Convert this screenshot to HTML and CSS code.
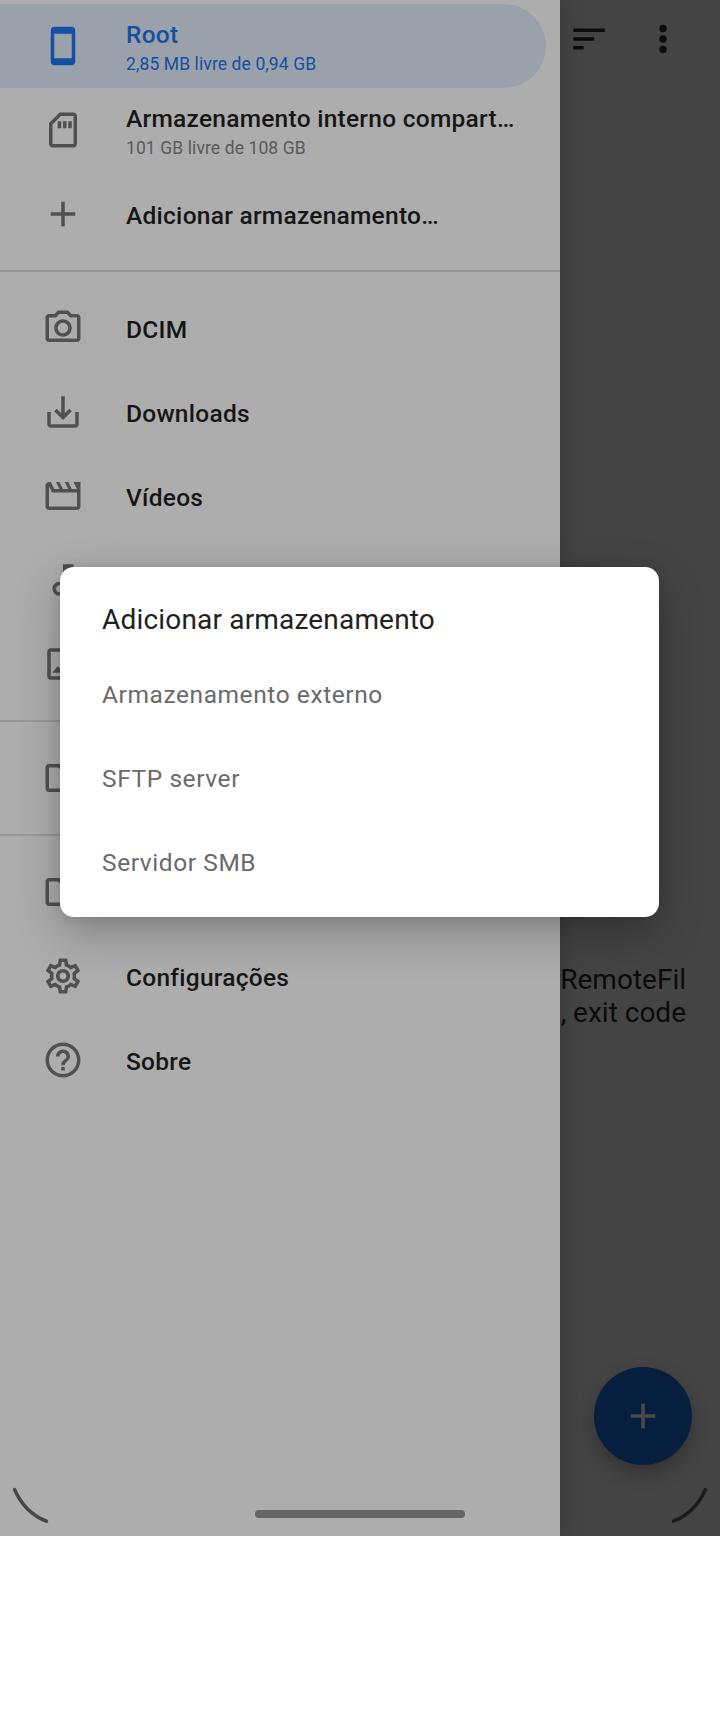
FILE: index.html
```html
<!DOCTYPE html>
<html lang="pt-BR">
<head>
<meta charset="utf-8">
<title>Adicionar armazenamento</title>
<link rel="stylesheet" href="styles.css">
</head>
<body>
<div class="screen">
  <nav class="drawer">
    <div class="group">
      <a class="item item--active">
        <svg class="icon" viewBox="0 0 24 24"><path d="M17 1.01L7 1c-1.1 0-2 .9-2 2v18c0 1.1.9 2 2 2h10c1.1 0 2-.9 2-2V3c0-1.1-.9-1.99-2-1.99zM17 19H7V5h10v14z"/></svg>
        <div class="label label--double"><span class="title">Root</span><span class="subtitle">2,85 MB livre de 0,94 GB</span></div>
      </a>
      <a class="item">
        <svg class="icon" viewBox="0 0 24 24"><path d="M18 2h-8L4 8v12c0 1.1.9 2 2 2h12c1.1 0 2-.9 2-2V4c0-1.1-.9-2-2-2zm0 18H6V8.83L10.83 4H18v16zM9 7h2v4H9zM12 7h2v4h-2zM15 7h2v4h-2z"/></svg>
        <div class="label label--double"><span class="title">Armazenamento interno compart…</span><span class="subtitle">101 GB livre de 108 GB</span></div>
      </a>
      <a class="item">
        <svg class="icon" viewBox="0 0 24 24"><path d="M19 13h-6v6h-2v-6H5v-2h6V5h2v6h6v2z"/></svg>
        <div class="label"><span class="title">Adicionar armazenamento…</span></div>
      </a>
    </div>
    <div class="group">
      <a class="item">
        <svg class="icon" viewBox="0 0 24 24"><path d="M14.12 4l1.83 2H20v12H4V6h4.05l1.83-2h4.24M15 2H9L7.17 4H4c-1.1 0-2 .9-2 2v12c0 1.1.9 2 2 2h16c1.1 0 2-.9 2-2V6c0-1.1-.9-2-2-2h-3.17L15 2zm-3 7c1.65 0 3 1.35 3 3s-1.35 3-3 3-3-1.35-3-3 1.35-3 3-3m0-2c-2.76 0-5 2.24-5 5s2.24 5 5 5 5-2.24 5-5-2.24-5-5-5z"/></svg>
        <div class="label"><span class="title">DCIM</span></div>
      </a>
      <a class="item">
        <svg class="icon" viewBox="0 0 24 24"><path d="M19 12v7H5v-7H3v7c0 1.1.9 2 2 2h14c1.1 0 2-.9 2-2v-7h-2zm-6 .67l2.59-2.58L17 11.5l-5 5-5-5 1.41-1.41L11 12.67V3h2v9.67z"/></svg>
        <div class="label"><span class="title">Downloads</span></div>
      </a>
      <a class="item">
        <svg class="icon" viewBox="0 0 24 24"><path d="M4 6.47L5.76 10H20v8H4V6.47M22 4h-4l2 4h-3l-2-4h-2l2 4h-3l-2-4H8l2 4H7L5 4H4c-1.1 0-1.99.9-1.99 2L2 18c0 1.1.9 2 2 2h16c1.1 0 2-.9 2-2V4z"/></svg>
        <div class="label"><span class="title">Vídeos</span></div>
      </a>
      <a class="item">
        <svg class="icon" viewBox="0 0 24 24"><path d="M12 3l.01 10.55c-.59-.34-1.27-.55-2-.55C7.79 13 6 14.79 6 17s1.79 4 4.01 4S14 19.21 14 17V7h4V3h-6zm-1.99 16c-1.1 0-2-.9-2-2s.9-2 2-2 2 .9 2 2-.9 2-2 2z"/></svg>
      </a>
      <a class="item">
        <svg class="icon" viewBox="0 0 24 24"><path d="M19 5v14H5V5h14m0-2H5c-1.1 0-2 .9-2 2v14c0 1.1.9 2 2 2h14c1.1 0 2-.9 2-2V5c0-1.1-.9-2-2-2zm-4.86 8.86l-3 3.87L9 13.14 6 17h12l-3.86-5.14z"/></svg>
      </a>
    </div>
    <div class="group">
      <a class="item">
        <svg class="icon" viewBox="0 0 24 24"><path d="M9.17 6l2 2H20v10H4V6h5.17M10 4H4c-1.1 0-1.99.9-1.99 2L2 18c0 1.1.9 2 2 2h16c1.1 0 2-.9 2-2V8c0-1.1-.9-2-2-2h-8l-2-2z"/></svg>
      </a>
    </div>
    <div class="group">
      <a class="item">
        <svg class="icon" viewBox="0 0 24 24"><path d="M9.17 6l2 2H20v10H4V6h5.17M10 4H4c-1.1 0-1.99.9-1.99 2L2 18c0 1.1.9 2 2 2h16c1.1 0 2-.9 2-2V8c0-1.1-.9-2-2-2h-8l-2-2z"/></svg>
      </a>
      <a class="item">
        <svg class="icon" viewBox="0 0 24 24"><path d="M19.43 12.98c.04-.32.07-.64.07-.98 0-.34-.03-.66-.07-.98l2.11-1.65c.19-.15.24-.42.12-.64l-2-3.46c-.09-.16-.26-.25-.44-.25-.06 0-.12.01-.17.03l-2.49 1c-.52-.4-1.08-.73-1.69-.98l-.38-2.65C14.46 2.18 14.25 2 14 2h-4c-.25 0-.46.18-.49.42l-.38 2.65c-.61.25-1.17.59-1.69.98l-2.49-1c-.06-.02-.12-.03-.18-.03-.17 0-.34.09-.43.25l-2 3.46c-.13.22-.07.49.12.64l2.11 1.65c-.04.32-.07.65-.07.98 0 .33.03.66.07.98l-2.11 1.65c-.19.15-.24.42-.12.64l2 3.46c.09.16.26.25.44.25.06 0 .12-.01.17-.03l2.49-1c.52.4 1.08.73 1.69.98l.38 2.65c.03.24.24.42.49.42h4c.25 0 .46-.18.49-.42l.38-2.65c.61-.25 1.17-.59 1.69-.98l2.49 1c.06.02.12.03.18.03.17 0 .34-.09.43-.25l2-3.46c.12-.22.07-.49-.12-.64l-2.11-1.65zm-1.98-1.71c.04.31.05.52.05.73 0 .21-.02.43-.05.73l-.14 1.13.89.7 1.08.84-.7 1.21-1.27-.51-1.04-.42-.9.68c-.43.32-.84.56-1.25.73l-1.06.43-.16 1.13-.2 1.35h-1.4l-.19-1.35-.16-1.13-1.06-.43c-.43-.18-.83-.41-1.23-.71l-.91-.7-1.06.43-1.27.51-.7-1.21 1.08-.84.89-.7-.14-1.13c-.03-.31-.05-.54-.05-.74s.02-.43.05-.73l.14-1.13-.89-.7-1.08-.84.7-1.21 1.27.51 1.04.42.9-.68c.43-.32.84-.56 1.25-.73l1.06-.43.16-1.13.2-1.35h1.39l.19 1.35.16 1.13 1.06.43c.43.18.83.41 1.23.71l.91.7 1.06-.43 1.27-.51.7 1.21-1.07.85-.89.7.14 1.13zM12 8c-2.21 0-4 1.79-4 4s1.79 4 4 4 4-1.79 4-4-1.79-4-4-4zm0 6c-1.1 0-2-.9-2-2s.9-2 2-2 2 .9 2 2-.9 2-2 2z"/></svg>
        <div class="label"><span class="title">Configurações</span></div>
      </a>
      <a class="item">
        <svg class="icon" viewBox="0 0 24 24"><path d="M11 18h2v-2h-2v2zm1-16C6.48 2 2 6.48 2 12s4.48 10 10 10 10-4.48 10-10S17.52 2 12 2zm0 18c-4.41 0-8-3.59-8-8s3.59-8 8-8 8 3.59 8 8-3.59 8-8 8zm0-14c-2.21 0-4 1.79-4 4h2c0-1.1.9-2 2-2s2 .9 2 2c0 2-3 1.75-3 5h2c0-2.25 3-2.5 3-5 0-2.21-1.79-4-4-4z"/></svg>
        <div class="label"><span class="title">Sobre</span></div>
      </a>
    </div>
  </nav>

  <main class="content">
    <header class="toolbar">
      <svg class="icon" viewBox="0 0 24 24"><path d="M3 18h6v-2H3v2zM3 6v2h18V6H3zm0 7h12v-2H3v2z"/></svg>
      <svg class="icon" viewBox="0 0 24 24"><circle cx="12" cy="6" r="2.1"/><circle cx="12" cy="12" r="2.1"/><circle cx="12" cy="18" r="2.1"/></svg>
    </header>
    <p class="message">RemoteFil<br>, exit code</p>
    <button class="fab"><svg class="icon" viewBox="0 0 24 24"><path d="M19 13h-6v6h-2v-6H5v-2h6V5h2v6h6v2z"/></svg></button>
  </main>

  <section class="dialog">
    <h1 class="dialog-title">Adicionar armazenamento</h1>
    <ul class="options">
      <li>Armazenamento externo</li>
      <li>SFTP server</li>
      <li>Servidor SMB</li>
    </ul>
  </section>

  <div class="gesture-bar">
    <svg class="corner corner--left" viewBox="0 0 38 38"><path d="M3.5 3.5Q14 27 35.5 35.2"/></svg>
    <span class="home-handle"></span>
    <svg class="corner corner--right" viewBox="0 0 38 38"><path d="M34.5 3.5Q24 27 2.5 35.2"/></svg>
  </div>
</div>
</body>
</html>
```
FILE: styles.css
```css
* { box-sizing: border-box; }

body {
  margin: 0;
  background: #fff;
  font-family: Roboto, "Noto Sans", sans-serif;
}

.screen {
  position: relative;
  display: grid;
  grid-template-columns: 560px 160px;
  height: 1536px;
  overflow: hidden;
}

.icon {
  display: block;
  flex: none;
  width: 42px;
  height: 42px;
  fill: currentColor;
}

/* Navigation drawer */
.drawer {
  position: relative;
  z-index: 1;
  padding-top: 4px;
  background: #adadad;
  box-shadow: 0 0 22px rgba(0, 0, 0, .22);
}

.group + .group {
  margin-top: 14px;
  padding-top: 14px;
  border-top: 2px solid #999;
}

.item {
  display: flex;
  align-items: center;
  gap: 42px;
  height: 84px;
  margin-right: 14px;
  padding-left: 42px;
  color: #505050;
}

.item--active {
  border-radius: 0 42px 42px 0;
  background: #9ba1ab;
  color: #1250a3;
}

.label {
  display: flex;
  flex-direction: column;
  padding-top: 3px;
  color: #161616;
  white-space: nowrap;
}

.title {
  font-size: 24.5px;
  font-weight: 500;
  letter-spacing: .26px;
  line-height: 30px;
}

.subtitle {
  margin-top: 2px;
  color: #5a5a5a;
  font-size: 17.5px;
  letter-spacing: .1px;
  line-height: 24px;
}

.item--active .label,
.item--active .subtitle { color: #1250a3; }

/* File pane */
.content {
  display: flex;
  flex-direction: column;
  background: #444;
  color: #0b0b0b;
}

.toolbar {
  display: flex;
  gap: 32px;
  padding: 18px 8px;
}

.message {
  margin: 885px 34px 0 0;
  font-size: 28px;
  line-height: 33px;
  text-align: right;
  white-space: nowrap;
}

.fab {
  display: grid;
  place-items: center;
  width: 98px;
  height: 98px;
  margin: auto 28px 71px auto;
  padding: 0;
  border: 0;
  border-radius: 50%;
  background: #061f3f;
  box-shadow: 0 8px 18px rgba(0, 0, 0, .28);
  color: #4a4a4a;
}

/* Dialog */
.dialog {
  position: absolute;
  z-index: 2;
  top: 567px;
  left: 60px;
  width: 599px;
  height: 350px;
  padding: 33px 42px;
  border-radius: 14px;
  background: #fff;
  box-shadow: 0 16px 44px rgba(0, 0, 0, .26), 0 0 12px rgba(0, 0, 0, .1);
}

.dialog-title {
  margin: 0;
  color: #212121;
  font-size: 28px;
  font-weight: 400;
  letter-spacing: .18px;
  line-height: 40px;
}

.options {
  margin: 13px 0 0;
  padding: 0;
  list-style: none;
}

.options li {
  height: 84px;
  color: #6a6a6a;
  font-size: 24.5px;
  letter-spacing: .58px;
  line-height: 84px;
}

/* System gesture area */
.gesture-bar {
  position: absolute;
  z-index: 3;
  right: 11px;
  bottom: 12px;
  left: 11px;
  display: flex;
  align-items: flex-end;
  justify-content: space-between;
}

.home-handle {
  width: 210px;
  height: 8px;
  margin-bottom: 6px;
  border-radius: 4px;
  background: #656565;
}

.corner {
  width: 38px;
  height: 38px;
  fill: none;
  stroke-width: 3.5;
  stroke-linecap: round;
}

.corner--left { stroke: #464646; }
.corner--right { stroke: #1c1c1c; }
```
